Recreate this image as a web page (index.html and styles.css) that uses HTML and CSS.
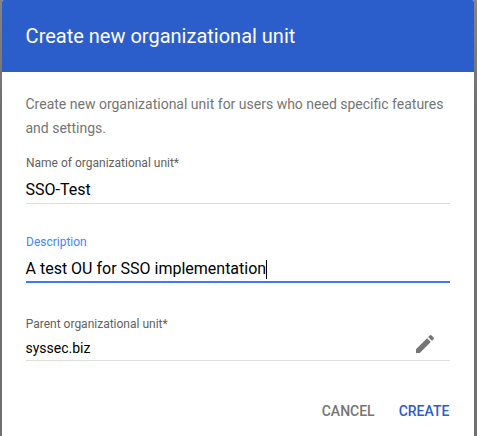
FILE: index.html
```html
<!DOCTYPE html>
<html lang="en">
<head>
<meta charset="utf-8">
<title>Create new organizational unit</title>
<link rel="stylesheet" href="styles.css">
</head>
<body>
<main class="dialog">
  <header class="dialog-header"><h1 class="title"><span>Create new organizational unit</span></h1></header>
  <div class="dialog-body">
    <p class="intro">Create new organizational unit for users who need specific features and settings.</p>
    <section class="field field-name">
      <div class="label"><span>Name of organizational unit*</span></div>
      <div class="value"><span>SSO-Test</span></div>
    </section>
    <section class="field field-description">
      <div class="label"><span>Description</span></div>
      <div class="value"><span>A test OU for SSO implementation</span><i class="caret"></i></div>
    </section>
    <section class="field field-parent">
      <div class="parent-text">
        <div class="label"><span>Parent organizational unit*</span></div>
        <div class="value"><span>syssec.biz</span></div>
      </div>
      <svg class="edit" viewBox="0 0 24 24" aria-hidden="true"><path d="M3 17.25V21h3.75L17.81 9.94l-3.75-3.75L3 17.25zM20.71 7.04a1 1 0 0 0 0-1.41l-2.34-2.34a1 1 0 0 0-1.41 0l-1.83 1.83 3.75 3.75 1.83-1.83z"/></svg>
    </section>
    <footer class="actions">
      <span class="action">CANCEL</span>
      <span class="action primary">CREATE</span>
    </footer>
  </div>
</main>
</body>
</html>
```
FILE: styles.css
```css
* { box-sizing: border-box; }
body {
  margin: 0;
  height: 436px;
  overflow: hidden;
  padding: 0 3px 0 2px;
  background: linear-gradient(#858585, #707070 25%, #707070);
  font-family: Roboto, sans-serif;
  color: #000;
}
.dialog {
  height: 436px;
  background: #fff;
  border-radius: 2px 2px 0 0;
  overflow: hidden;
}
.dialog-header {
  height: 72px;
  padding: 24px 24px 0;
  background: #2c5ecb;
}
.title {
  margin: 0 0 0 -0.4px;
  font-size: 20px;
  line-height: 24px;
  font-weight: 400;
  color: #fff;
}
.dialog-body { padding: 20px 24px 0; }
.intro {
  margin: 0 0 0 -0.5px;
  height: 64px;
  font-size: 14px;
  line-height: 24px;
  color: #757575;
}
.label {
  font-size: 12px;
  line-height: 14px;
  color: #616161;
}
.value {
  display: flex;
  align-items: center;
  margin-left: -0.5px;
  font-size: 16px;
  line-height: 20px;
}
.field { border-bottom: 1px solid #dedede; }
.field-name { height: 48px; }
.field-name .value { margin-top: 10px; }
.field-description {
  height: 48px;
  margin-top: 31px;
  border-bottom: 2px solid #3b7ded;
}
.field-description .label { color: #4285f4; }
.field-description .value { margin-top: 10px; }
.caret { width: 1px; height: 19px; margin-left: -0.5px; background: #000; }
.field-parent {
  display: flex;
  justify-content: space-between;
  height: 44px;
  margin-top: 34px;
}
.field-parent .label { margin-left: -0.3px; }
.field-parent .value { margin-top: 7px; font-size: 14px; }
.edit {
  width: 24px;
  height: 24px;
  margin: 15px 13px 0 0;
  fill: #757575;
}
.actions {
  display: flex;
  justify-content: flex-end;
  gap: 24px;
  margin-top: 41px;
  padding-right: 0.6px;
}
.action {
  font-size: 14px;
  line-height: 18px;
  font-weight: 500;
  color: #757575;
}
.primary { color: #2c5ecb; }
```
